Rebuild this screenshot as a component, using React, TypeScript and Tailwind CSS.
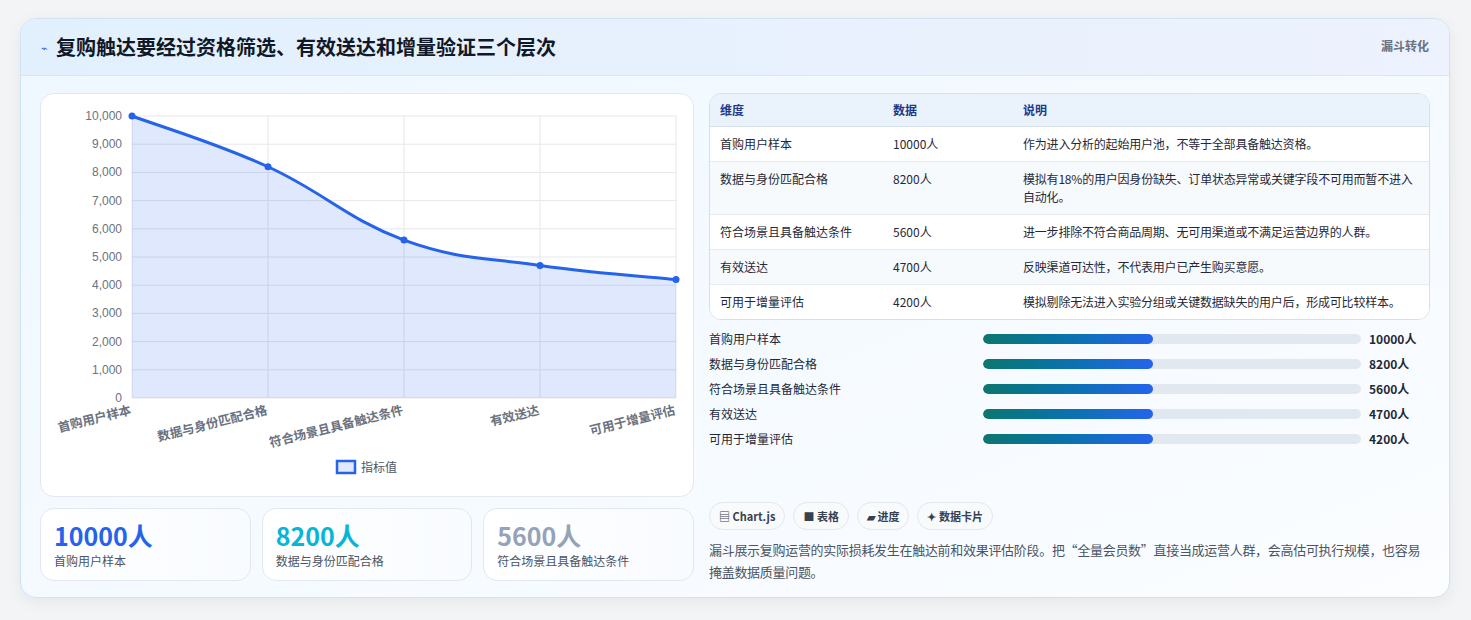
import React from "react";

const rows = [
  ["首购用户样本", "10000人", "作为进入分析的起始用户池，不等于全部具备触达资格。"],
  ["数据与身份匹配合格", "8200人", "模拟有18%的用户因身份缺失、订单状态异常或关键字段不可用而暂不进入自动化。"],
  ["符合场景且具备触达条件", "5600人", "进一步排除不符合商品周期、无可用渠道或不满足运营边界的人群。"],
  ["有效送达", "4700人", "反映渠道可达性，不代表用户已产生购买意愿。"],
  ["可用于增量评估", "4200人", "模拟剔除无法进入实验分组或关键数据缺失的用户后，形成可比较样本。"],
];
const vals = [10000, 8200, 5600, 4700, 4200];

function Chart() {
  const x0 = 91, x1 = 635, y0 = 22, y1 = 304;
  const px = (i: number) => x0 + ((x1 - x0) / 4) * i;
  const py = (v: number) => y1 - ((y1 - y0) * v) / 10000;
  const pts = vals.map((v, i) => [px(i), py(v)]);
  let d = `M${pts[0][0]},${pts[0][1]}`;
  for (let i = 1; i < pts.length; i++) {
    const [ax, ay] = pts[i - 1];
    const [bx, by] = pts[i];
    const p0 = pts[Math.max(0, i - 2)], p3 = pts[Math.min(pts.length - 1, i + 1)];
    const t = 0.2;
    const c1x = ax + (bx - p0[0]) * t, c1y = ay + (by - p0[1]) * t;
    const c2x = bx - (p3[0] - ax) * t, c2y = by - (p3[1] - ay) * t;
    d += ` C${c1x},${c1y} ${c2x},${c2y} ${bx},${by}`;
  }
  const area = d + ` L${x1},${y1} L${x0},${y1} Z`;
  const labels = ["首购用户样本", "数据与身份匹配合格", "符合场景且具备触达条件", "有效送达", "可用于增量评估"];
  return (
    <svg width="653" height="403" className="block" style={{ fontFamily: "'Liberation Sans','Noto Sans CJK SC',sans-serif" }}>
      {Array.from({ length: 11 }).map((_, k) => (
        <g key={k}>
          <line x1={x0} x2={x1} y1={py(k * 1000)} y2={py(k * 1000)} stroke="#e5e7eb" />
          <text x={x0 - 10} y={py(k * 1000) + 4} textAnchor="end" fontSize="12" fill="#6b7280">
            {(k * 1000).toLocaleString("en-US")}
          </text>
        </g>
      ))}
      {[0, 1, 2, 3, 4].map((i) => (
        <line key={i} x1={px(i)} x2={px(i)} y1={y0} y2={y1} stroke="#e5e7eb" />
      ))}
      <path d={area} fill="rgba(37,99,235,0.15)" />
      <path d={d} fill="none" stroke="#2563eb" strokeWidth="3" />
      {pts.map(([x, y], i) => (
        <circle key={i} cx={x} cy={y} r="3.5" fill="#2563eb" />
      ))}
      {labels.map((l, i) => (
        <text key={l} x={px(i)} y={y1 + 16} textAnchor="end" fontSize="12.5" fontWeight="600" fill="#6b7280" transform={`rotate(-14 ${px(i)} ${y1 + 16})`}>
          {l}
        </text>
      ))}
      <rect x="296" y="367" width="18" height="12" fill="rgba(37,99,235,0.15)" stroke="#2563eb" strokeWidth="2.5" />
      <text x="320" y="378" fontSize="12" fill="#4b5563">指标值</text>
    </svg>
  );
}

export default function App() {
  return (
    <div className="w-[1471px] h-[620px] bg-[#f3f4f6] pt-[18px] px-[20px]" style={{ fontFamily: "'Noto Sans CJK SC','Noto Sans',sans-serif" }}>
      <div className="w-[1430px] h-[580px] rounded-[16px] border border-[#cfe3f3] bg-gradient-to-br from-[#eef7ff] to-[#fbfdff] overflow-hidden shadow-[0_4px_16px_rgba(0,0,0,0.06)]">
        <div className="h-[57px] flex items-center justify-between px-[20px] bg-gradient-to-r from-[#e2f0fd] to-[#edf2fd] border-b border-[#d6e7f7]">
          <div className="flex items-center gap-2">
            <span className="text-[#2563eb] text-[11px]">⌁</span>
            <span className="text-[20px] font-bold text-[#111827]">复购触达要经过资格筛选、有效送达和增量验证三个层次</span>
          </div>
          <span className="text-[12px] font-bold text-[#6b7280] self-start mt-[18px]">漏斗转化</span>
        </div>
        <div className="flex gap-[15px] px-[19px] pt-[17px]">
          <div className="w-[654px] flex flex-col gap-[11px]">
            <div className="h-[404px] rounded-[14px] border border-[#e1e8f0] bg-white">
              <Chart />
            </div>
            <div className="grid grid-cols-3 gap-[11px]">
              {[["10000人", "text-[#2563eb]", "首购用户样本"], ["8200人", "text-[#06b6d4]", "数据与身份匹配合格"], ["5600人", "text-[#94a3b8]", "符合场景且具备触达条件"]].map(([v, c, l]) => (
                <div key={l} className="h-[73px] rounded-[14px] border border-[#e1e8f0] bg-gradient-to-r from-white to-[#f8fbff] px-[13px] pt-[10px]">
                  <div className={`text-[25px] font-bold leading-[32px] ${c}`}>{v}</div>
                  <div className="text-[12px] text-[#4b5563] mt-[1px]">{l}</div>
                </div>
              ))}
            </div>
          </div>
          <div className="w-[724px] flex flex-col">
            <div className="rounded-[12px] border border-[#d6e0ea] overflow-hidden bg-white text-[12px]">
              <div className="flex h-[33px] items-center bg-[#eaf3fc] font-bold text-[#1e3a8a] border-b border-[#d6e0ea]">
                <div className="w-[183px] pl-[10px]">维度</div>
                <div className="w-[130px]">数据</div>
                <div className="flex-1">说明</div>
              </div>
              {rows.map((r, i) => (
                <div key={i} className={`flex py-[8px] border-b border-[#e5ebf1] last:border-b-0 ${i % 2 ? "bg-[#f7fafd]" : "bg-white"} text-[#1f2937] leading-[18px]`}>
                  <div className="w-[183px] pl-[10px]">{r[0]}</div>
                  <div className="w-[130px]">{r[1]}</div>
                  <div className="flex-1 pr-[10px] tracking-[-0.2px]">{r[2]}</div>
                </div>
              ))}
            </div>
            <div className="mt-[9px] flex flex-col gap-[5px] text-[12px]">
              {rows.map((r) => (
                <div key={r[0]} className="flex items-center h-[20px]">
                  <div className="w-[274px] text-[#1f2937]">{r[0]}</div>
                  <div className="w-[378px] h-[10px] rounded-full bg-[#e2e8f0] overflow-hidden">
                    <div className="w-[45%] h-full rounded-full bg-gradient-to-r from-[#0f766e] to-[#2563eb]" />
                  </div>
                  <div className="ml-[8px] font-bold text-[#1f2937]">{r[1]}</div>
                </div>
              ))}
            </div>
            <div className="mt-[53px] flex gap-[8px] text-[11px] font-bold text-[#374151]">
              {["▤ Chart.js", "■ 表格", "▰ 进度", "✦ 数据卡片"].map((t) => (
                <span key={t} className="h-[28px] px-[9px] flex items-center rounded-full border border-[#e1e8f0] bg-[#f8fafc]">{t}</span>
              ))}
            </div>
            <p className="mt-[9px] text-[13px] leading-[22px] text-[#4b5563] tracking-[-0.3px]">
              漏斗展示复购运营的实际损耗发生在触达前和效果评估阶段。把“全量会员数”直接当成运营人群，会高估可执行规模，也容易掩盖数据质量问题。
            </p>
          </div>
        </div>
      </div>
    </div>
  );
}
